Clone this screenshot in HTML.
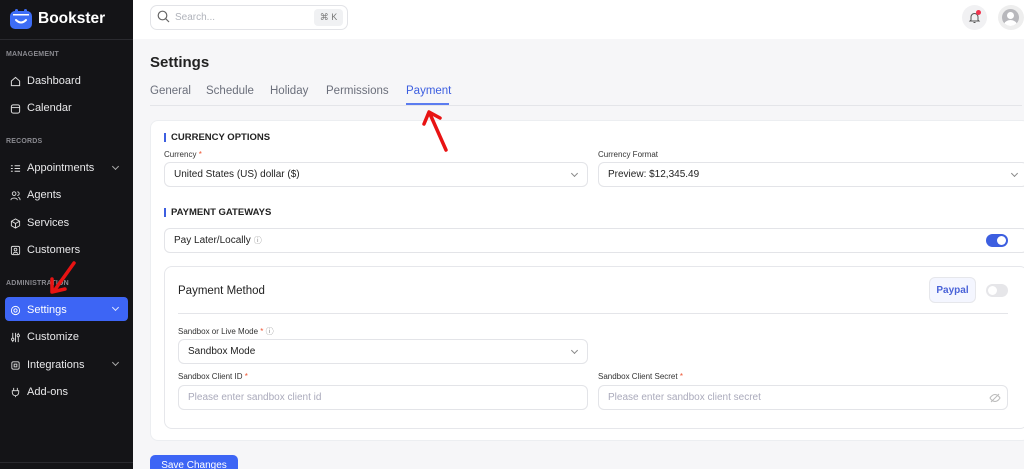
<!DOCTYPE html>
<html style="overflow:hidden;width:1024px;height:469px"><head><meta charset="utf-8"><style>
*{box-sizing:border-box;margin:0;padding:0}
body{width:1024px;height:469px;overflow:hidden;font-family:"Liberation Sans",sans-serif;background:#f6f6f8;position:relative}
.a{position:absolute}
#sb{left:0;top:0;width:133px;height:469px;background:#141417;color:#e8e8ea;z-index:1}
.sec{position:absolute;left:6px;font-size:7px;font-weight:bold;color:#8a8a90;letter-spacing:.2px}
.it{position:absolute;left:10px;font-size:11px;color:#e8e8ea;display:flex;align-items:center;gap:6px}
.it svg{width:11px;height:11px}
.chev{position:absolute;left:113px;width:5px;height:5px;border-right:1.2px solid #aaa;border-bottom:1.2px solid #aaa;transform:rotate(45deg)}
.lbl{position:absolute;font-size:8px;color:#333}
.lbl b{color:#e53;font-weight:normal}
.inp{position:absolute;border:1px solid #e3e4e8;border-radius:6px;background:#fff;font-size:10px;color:#222;padding-left:9px;display:flex;align-items:center}
.dd::after{content:"";position:absolute;right:10px;top:8px;width:4px;height:4px;border-right:1px solid #888;border-bottom:1px solid #888;transform:rotate(45deg)}
.ph{color:#aab}
.tab{position:absolute;top:85px;font-size:11.5px;color:#6b6f7b}
</style></head><body>
<div id="sb" class="a">
 <svg class="a" style="left:10px;top:9px" width="22" height="20" viewBox="0 0 22 20"><rect x="0" y="2" width="22" height="18" rx="5" fill="#3d6df6"/><rect x="5" y="0" width="3" height="5" rx="1.5" fill="#3d6df6"/><rect x="14" y="0" width="3" height="5" rx="1.5" fill="#3d6df6"/><rect x="3" y="5" width="16" height="1.5" fill="#fff"/><path d="M6 11 Q11 16 16 11" stroke="#fff" stroke-width="2" fill="none" stroke-linecap="round"/></svg>
 <div class="a" style="left:38px;top:10px;font-size:15.5px;font-weight:bold;color:#fff">Bookster</div>
 <div class="a" style="left:0;top:39px;width:133px;height:1px;background:#2a2a2f"></div>
 <div class="sec" style="top:51px">MANAGEMENT</div>
 <div class="it" style="top:75px"><svg viewBox="0 0 12 12"><path d="M1.5 5.5L6 1.5l4.5 4V10.5h-9z" fill="none" stroke="#ddd" stroke-width="1.1"/></svg>Dashboard</div>
 <div class="it" style="top:102px"><svg viewBox="0 0 12 12"><rect x="1.5" y="2" width="9" height="9" rx="2" fill="none" stroke="#ddd" stroke-width="1.1"/><path d="M1.5 5h9" stroke="#ddd"/></svg>Calendar</div>
 <div class="sec" style="top:138px">RECORDS</div>
 <div class="it" style="top:162px"><svg viewBox="0 0 12 12"><path d="M1 3h2M1 6h2M1 9h2M5 3h6M5 6h6M5 9h6" stroke="#ddd" stroke-width="1.1"/></svg>Appointments</div><div class="chev" style="top:164px"></div>
 <div class="it" style="top:189px"><svg viewBox="0 0 12 12"><circle cx="4.5" cy="4" r="2" fill="none" stroke="#ddd"/><path d="M1 11c0-3 7-3 7 0M8 2a2 2 0 010 4M9 8c2 .5 2 2 2 3" fill="none" stroke="#ddd"/></svg>Agents</div>
 <div class="it" style="top:217px"><svg viewBox="0 0 12 12"><path d="M6 1l4.5 2.5v5L6 11 1.5 8.5v-5zM1.5 3.5L6 6l4.5-2.5M6 6v5" fill="none" stroke="#ddd"/></svg>Services</div>
 <div class="it" style="top:244px"><svg viewBox="0 0 12 12"><rect x="1.5" y="1.5" width="9" height="9" rx="1.5" fill="none" stroke="#ddd"/><circle cx="6" cy="5" r="1.5" fill="none" stroke="#ddd"/><path d="M3.5 9.5c.5-2 4.5-2 5 0" fill="none" stroke="#ddd"/></svg>Customers</div>
 <div class="sec" style="top:280px">ADMINISTRATION</div>
 <div class="a" style="left:5px;top:297px;width:123px;height:24px;background:#3d65f5;border-radius:4px"></div>
 <div class="it" style="top:304px;color:#fff"><svg viewBox="0 0 12 12"><circle cx="6" cy="6" r="4.5" fill="none" stroke="#fff"/><circle cx="6" cy="6" r="1.8" fill="none" stroke="#fff"/></svg>Settings</div><div class="chev" style="top:305px;border-color:#dfe6ff"></div>
 <div class="it" style="top:331px"><svg viewBox="0 0 12 12"><path d="M3 1v10M9 1v10M6 1v10" stroke="#ddd"/><circle cx="3" cy="8" r="1.3" fill="#141417" stroke="#ddd"/><circle cx="9" cy="4" r="1.3" fill="#141417" stroke="#ddd"/></svg>Customize</div>
 <div class="it" style="top:359px"><svg viewBox="0 0 12 12"><rect x="2" y="2" width="8" height="8" rx="1.5" fill="none" stroke="#ddd"/><rect x="4.5" y="4.5" width="3" height="3" fill="none" stroke="#ddd"/></svg>Integrations</div><div class="chev" style="top:360px"></div>
 <div class="it" style="top:386px"><svg viewBox="0 0 12 12"><path d="M4 1v3M8 1v3M2.5 4h7v2a3.5 3.5 0 01-7 0zM6 9.5V11" fill="none" stroke="#ddd"/></svg>Add-ons</div>
 <div class="a" style="left:0;top:462px;width:133px;height:1px;background:#2a2a2f"></div>
</div>
<div class="a" style="left:133px;top:0;width:891px;height:39px;background:#fff"></div>
<div class="a" style="left:150px;top:5px;width:198px;height:25px;border:1px solid #e2e3e7;border-radius:7px;background:#fff"></div>
<svg class="a" style="left:157px;top:10px" width="13" height="13" viewBox="0 0 13 13"><circle cx="5.5" cy="5.5" r="4.3" fill="none" stroke="#666" stroke-width="1.2"/><path d="M8.7 8.7L12 12" stroke="#666" stroke-width="1.2"/></svg>
<div class="a" style="left:175px;top:12px;font-size:10px;color:#b0b3bb">Search...</div>
<div class="a" style="left:314px;top:9px;width:29px;height:17px;background:#f0f1f3;border-radius:4px;font-size:9px;color:#777;text-align:center;line-height:17px">⌘ K</div>
<div class="a" style="left:962px;top:5px;width:25px;height:25px;border-radius:50%;background:#f1f1f3"></div>
<svg class="a" style="left:968px;top:11px" width="13" height="13" viewBox="0 0 13 13"><path d="M3 9V6a3.5 3.5 0 017 0v3l1 1H2z" fill="none" stroke="#555" stroke-width="1"/><path d="M5.5 11.5h2" stroke="#555"/></svg>
<div class="a" style="left:976px;top:10px;width:5px;height:5px;border-radius:50%;background:#f2334d"></div>
<div class="a" style="left:998px;top:5px;width:26px;height:25px;border-radius:50%;background:#eee"></div>
<div class="a" style="left:1002px;top:9px;width:17px;height:17px;border-radius:50%;background:#b8b8bc;overflow:hidden"><div class="a" style="left:5px;top:3px;width:7px;height:7px;border-radius:50%;background:#fff"></div><div class="a" style="left:2px;top:11px;width:13px;height:10px;border-radius:50%;background:#fff"></div></div>

<div class="a" style="left:150px;top:54px;font-size:15px;font-weight:bold;color:#222">Settings</div>
<div class="tab" style="left:150px">General</div>
<div class="tab" style="left:206px">Schedule</div>
<div class="tab" style="left:270px">Holiday</div>
<div class="tab" style="left:326px">Permissions</div>
<div class="tab" style="left:406px;color:#3d5fe0">Payment</div>
<div class="a" style="left:150px;top:105px;width:872px;height:1px;background:#e4e5e9"></div>
<div class="a" style="left:406px;top:103px;width:43px;height:2px;background:#5b7cf0"></div>

<div class="a" style="left:150px;top:120px;width:880px;height:321px;background:#fff;border-radius:8px;border:1px solid #eceef1"></div>
<div class="a" style="left:164px;top:133px;width:2px;height:9px;background:#3d5fe0"></div>
<div class="a" style="left:171px;top:132px;font-size:9.5px;font-weight:bold;color:#222">CURRENCY OPTIONS</div>
<div class="lbl" style="left:164px;top:150px">Currency <b>*</b></div>
<div class="inp dd" style="left:164px;top:162px;width:424px;height:25px">United States (US) dollar ($)</div>
<div class="lbl" style="left:598px;top:150px">Currency Format</div>
<div class="inp dd" style="left:598px;top:162px;width:430px;height:25px">Preview: $12,345.49</div>
<div class="a" style="left:164px;top:208px;width:2px;height:9px;background:#3d5fe0"></div>
<div class="a" style="left:171px;top:207px;font-size:9.5px;font-weight:bold;color:#222">PAYMENT GATEWAYS</div>
<div class="inp" style="left:164px;top:228px;width:864px;height:25px">Pay Later/Locally <span style="font-size:8px;color:#888;margin-left:3px">ⓘ</span></div>
<div class="a" style="left:986px;top:234px;width:22px;height:13px;border-radius:7px;background:#3d5fe0"><div class="a" style="left:11px;top:2px;width:9px;height:9px;border-radius:50%;background:#fff"></div></div>

<div class="a" style="left:164px;top:266px;width:864px;height:163px;border:1px solid #e6e7eb;border-radius:8px"></div>
<div class="a" style="left:178px;top:285px;font-size:11.5px;color:#222">Payment Method</div>
<div class="a" style="left:929px;top:277px;width:47px;height:26px;border:1px solid #e6e7eb;border-radius:6px;background:#f4f6ff;font-size:10px;font-weight:bold;color:#4a63d8;text-align:center;line-height:26px">Paypal</div>
<div class="a" style="left:986px;top:284px;width:22px;height:13px;border-radius:7px;background:#e6e6e9"><div class="a" style="left:2px;top:2px;width:9px;height:9px;border-radius:50%;background:#fff"></div></div>
<div class="a" style="left:178px;top:313px;width:830px;height:1px;background:#e4e5e9"></div>
<div class="lbl" style="left:178px;top:326px">Sandbox or Live Mode <b>*</b> <span style="color:#888">ⓘ</span></div>
<div class="inp dd" style="left:178px;top:339px;width:410px;height:25px">Sandbox Mode</div>
<div class="lbl" style="left:178px;top:372px">Sandbox Client ID <b>*</b></div>
<div class="inp" style="left:178px;top:385px;width:410px;height:25px"><span class="ph">Please enter sandbox client id</span></div>
<div class="lbl" style="left:598px;top:372px">Sandbox Client Secret <b>*</b></div>
<div class="inp" style="left:598px;top:385px;width:410px;height:25px"><span class="ph">Please enter sandbox client secret</span><svg class="a" style="left:390px;top:6px" width="12" height="12" viewBox="0 0 12 12"><path d="M1 6s2-3.5 5-3.5S11 6 11 6s-2 3.5-5 3.5S1 6 1 6z" fill="none" stroke="#bbb"/><path d="M2 10L10 2" stroke="#bbb"/></svg></div>

<div class="a" style="left:150px;top:455px;width:88px;height:14px;background:#3d65f5;border-radius:5px 5px 0 0;overflow:hidden;color:#fff;font-size:10px;text-align:center;line-height:22px">Save Changes</div>

<svg class="a" style="left:0;top:0;z-index:2" width="1024" height="469"><g stroke="#e81313" stroke-width="3.5" fill="none" stroke-linecap="round" stroke-linejoin="round"><path d="M446 150L430 114M424 124L429 112L440 118"/><path d="M74 263L54 291M52 279L52 292L65 289"/></g></svg>
</body></html>
